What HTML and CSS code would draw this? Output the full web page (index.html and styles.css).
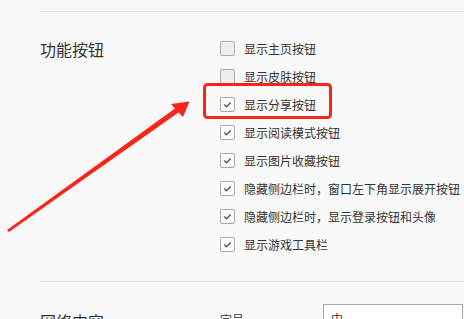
FILE: index.html
```html
<!DOCTYPE html>
<html lang="zh-CN">
<head>
    <meta charset="UTF-8">
    <meta name="viewport" content="width=device-width, initial-scale=1.0">
    <title>设置</title>
    <link rel="stylesheet" href="styles.css">
</head>
<body>
    <div class="page">
        <div class="section">
            <div class="title">功能按钮</div>
            <div class="options">
                <label class="option"><span class="box"></span>显示主页按钮</label>
                <label class="option"><span class="box"></span>显示皮肤按钮</label>
                <label class="option"><span class="box checked"><svg viewBox="0 0 15 15"><polyline points="3.8,7.6 6.3,10 11.2,5.2"/></svg></span>显示分享按钮</label>
                <label class="option"><span class="box checked"><svg viewBox="0 0 15 15"><polyline points="3.8,7.6 6.3,10 11.2,5.2"/></svg></span>显示阅读模式按钮</label>
                <label class="option"><span class="box checked"><svg viewBox="0 0 15 15"><polyline points="3.8,7.6 6.3,10 11.2,5.2"/></svg></span>显示图片收藏按钮</label>
                <label class="option"><span class="box checked"><svg viewBox="0 0 15 15"><polyline points="3.8,7.6 6.3,10 11.2,5.2"/></svg></span>隐藏侧边栏时，窗口左下角显示展开按钮</label>
                <label class="option"><span class="box checked"><svg viewBox="0 0 15 15"><polyline points="3.8,7.6 6.3,10 11.2,5.2"/></svg></span>隐藏侧边栏时，显示登录按钮和头像</label>
                <label class="option"><span class="box checked"><svg viewBox="0 0 15 15"><polyline points="3.8,7.6 6.3,10 11.2,5.2"/></svg></span>显示游戏工具栏</label>
            </div>
        </div>

        <div class="section">
            <div class="title">网络内容</div>
            <div class="field">
                <span class="label">字号</span>
                <div class="select">中</div>
            </div>
        </div>

        <!-- annotation drawn over the screenshot -->
        <svg class="mark" width="464" height="319" viewBox="0 0 464 319">
            <rect x="204.5" y="84.5" width="126" height="33" rx="3" />
            <polygon points="7,230 175,108.5 171,104 189.5,101.5 183,117 178.5,112.5 9,232" />
        </svg>
    </div>
</body>
</html>
```

FILE: styles.css
```css
body {
    margin: 0;
    background: #f9f9f9;
    color: #333;
    font-family: "Noto Sans CJK SC", "Microsoft YaHei", sans-serif;
}
.page {
    position: relative;
    width: 464px;
    height: 319px;
    overflow: hidden;
    padding-top: 11px;
    box-sizing: border-box;
}
.section {
    display: flex;
    margin-left: 40px;
    border-top: 1px solid #e6e6e6;
    padding: 22px 0 23px;
}
.title {
    width: 180px;
    flex-shrink: 0;
    font-size: 16px;
    line-height: 20px;
    margin-top: 5px;
}
.options {
    display: flex;
    flex-direction: column;
}
.option {
    display: flex;
    align-items: center;
    height: 28px;
    font-size: 12px;
    white-space: nowrap;
}
.box {
    width: 13px;
    height: 13px;
    border: 1px solid #acacac;
    border-radius: 2px;
    background: #efefef;
    margin-right: 9px;
    flex-shrink: 0;
    display: flex;
}
.box.checked {
    background: #fbfbfb;
}
.box svg {
    width: 13px;
    height: 13px;
}
.box polyline {
    fill: none;
    stroke: #555;
    stroke-width: 1.7;
}
.field {
    display: flex;
    align-items: center;
    height: 34px;
    margin-top: -2px;
}
.label {
    width: 103px;
    font-size: 12px;
}
.select {
    width: 140px;
    height: 30px;
    box-sizing: border-box;
    border: 1px solid #aaa;
    background: #fff;
    font-size: 12px;
    line-height: 28px;
    padding-left: 7px;
}
.section + .section .title {
    margin-top: 7px;
}
.mark {
    position: absolute;
    left: 0;
    top: 0;
}
.mark rect {
    fill: none;
    stroke: #f7261b;
    stroke-width: 3;
}
.mark polygon {
    fill: #f7261b;
}
```
